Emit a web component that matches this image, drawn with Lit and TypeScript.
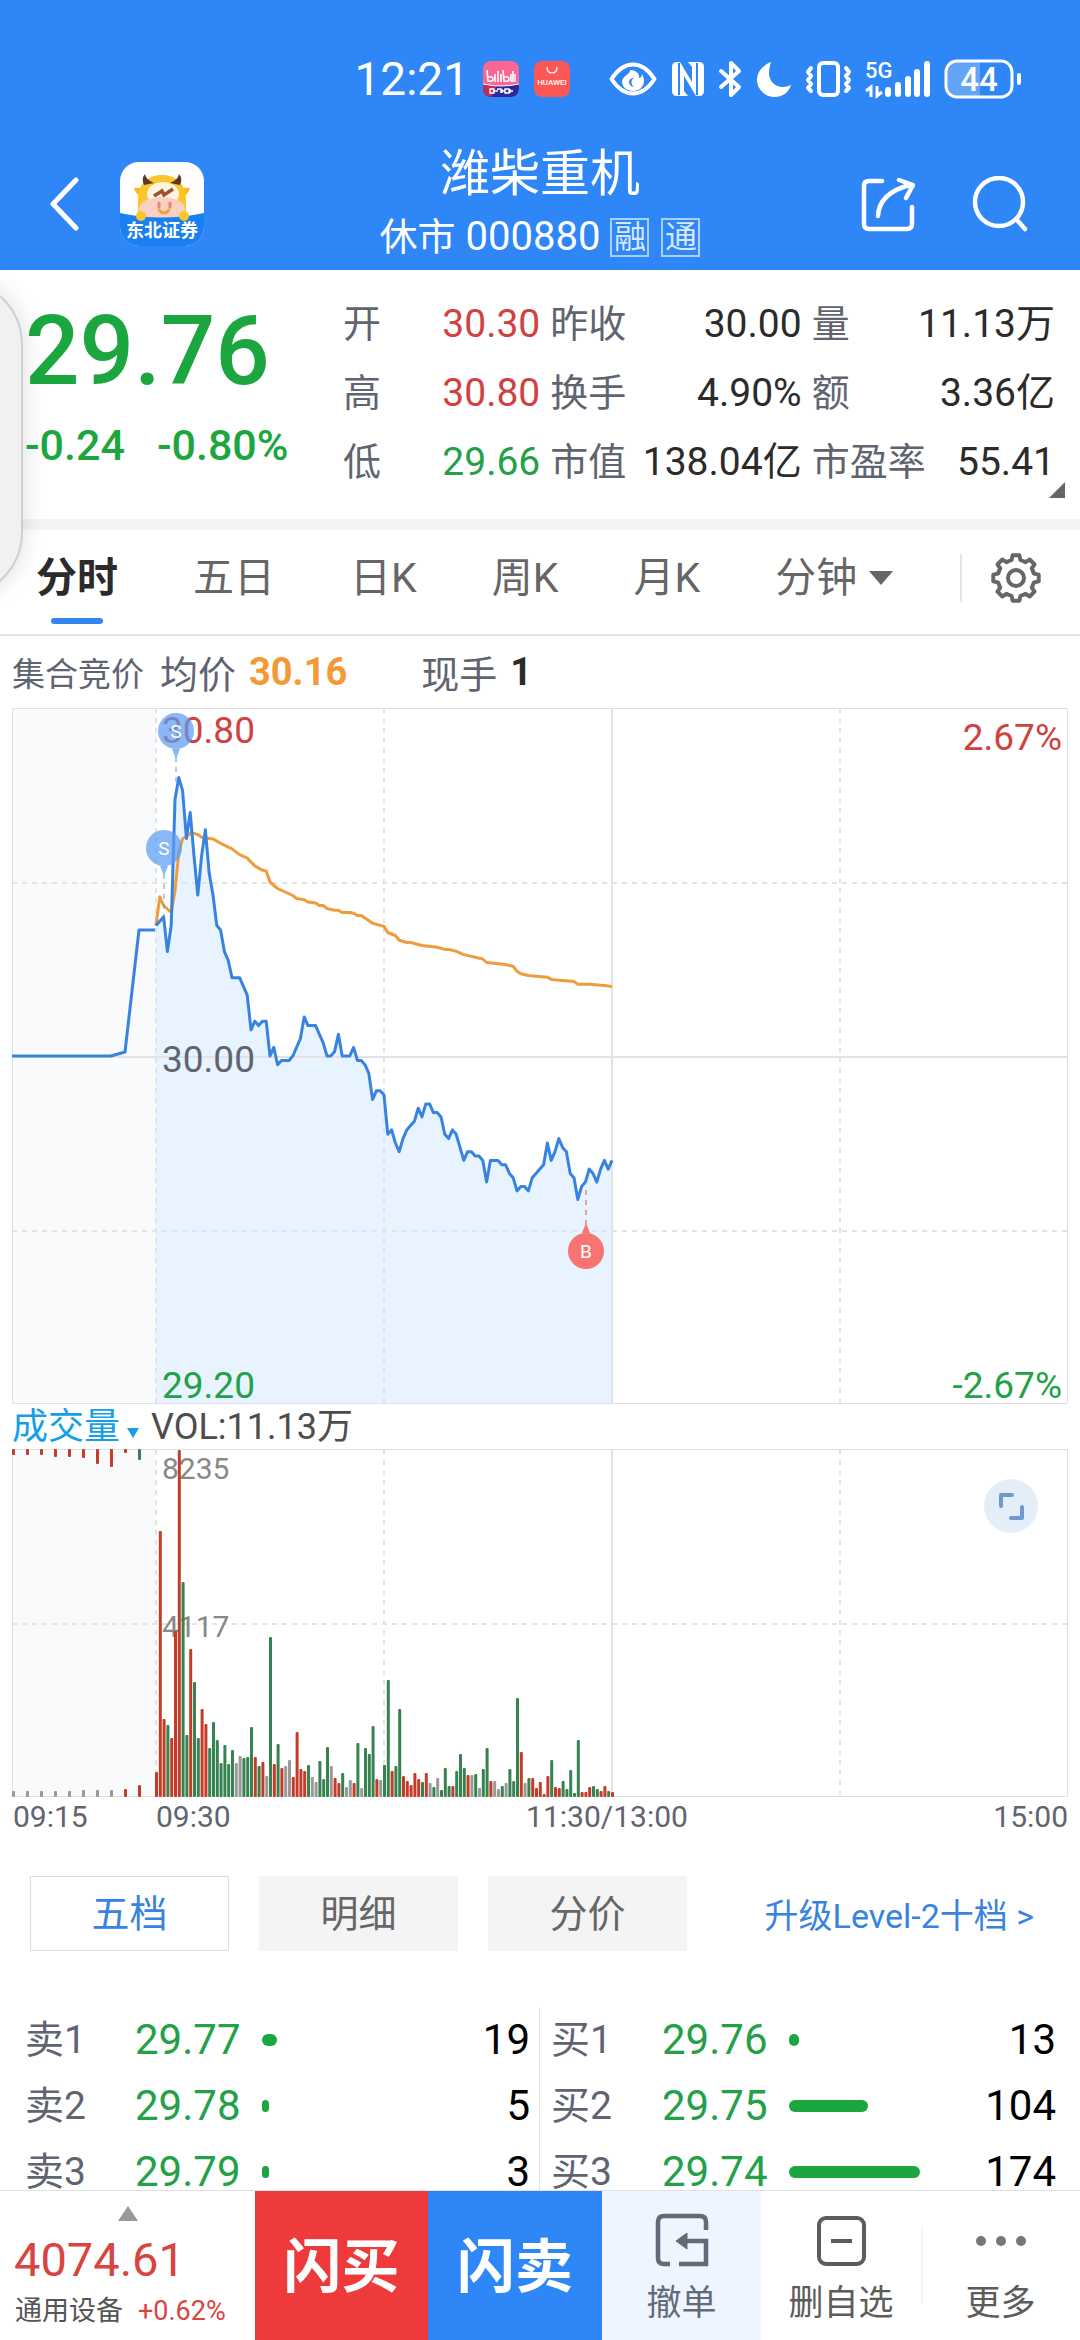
import { LitElement, html, svg, css } from "lit";
import { customElement } from "lit/decorators.js";

type Tone = "r" | "g" | "x";

/* Prices are stored per minute, in cents away from the previous close. */
const PRICE = [
  30, 31, 32, 24, 30, 59, 64, 61, 50, 56, 46, 37, 46, 52, 42, 37, 30, 29, 24, 22, 18, 18, 18, 16, 14, 6, 8, 7, 8, 8,
  0, 2, -2, -1, -1, -1, 0, 2, 4, 9, 7, 7, 7, 5, 3, 0, 0, 1, 5, 0, 0, 0, 2, -1, -1, -2, -4, -10, -8, -8,
  -9, -18, -17, -20, -22, -19, -17, -16, -15, -12, -14, -11, -11, -13, -13, -14, -18, -19, -17, -18, -21, -24, -22,
  -22, -23, -23, -24, -29, -24, -24, -24, -25, -25, -27, -28, -31, -30, -30, -31, -28, -27, -26, -25, -20, -24, -22,
  -19, -21, -22, -27, -28, -33, -30, -29, -26, -27, -29, -26, -24, -26, -24,
];

/* Average price: [minute, cents] */
const AVERAGE = [
  [0, 30], [1, 36.6], [2, 34.6], [4, 33], [5, 38], [6, 46.7], [7, 50], [8, 50.4], [9, 51.2], [10, 51.2], [11, 50.9],
  [12, 50.3], [13, 50.1], [15, 49.9], [17, 48.9], [20, 47.6], [22, 46.3], [24, 45.5], [26, 43.7], [28, 42.7],
  [29, 42.5], [30, 40], [32, 38.5], [36, 36.9], [37, 36.2], [39, 35.9], [40, 35.4], [42, 35.2], [43, 34.6],
  [44, 34.6], [45, 33.9], [47, 33.5], [48, 33.5], [49, 33], [51, 33], [52, 32.8], [53, 32.3], [54, 32.3], [57, 30.5],
  [60, 29.8], [61, 28.4], [63, 27.7], [64, 26.6], [66, 26.1], [67, 26.1], [70, 25.4], [74, 25], [76, 24.5],
  [77, 24.5], [79, 24.1], [81, 23.3], [86, 22.3], [87, 21.5], [92, 21], [94, 20.6], [95, 19.5], [96, 18.9],
  [98, 18.5], [103, 18.1], [104, 17.6], [110, 17.1], [111, 16.5], [114, 16.5], [118, 16.2], [120, 16],
];

const VOLUME =
  "25r 266r 78r 72g 59r 166r 347r 215g 62g 148r 115g 59g 88r 73r 49g 75g 57g 34g 52g 33g 47g 34x 41x 39g 40g 70g 40r " +
  "31g 35r 21x 160g 33r 53g 29r 31x 37x 20r 65r 28r 26r 32g 20x 15x 36g 18g 50g 31x 19r 14r 24g 10x 17x 14r 54g 9x " +
  "49g 43g 71g 18r 17x 32g 117g 26r 31g 88g 21r 16r 12r 24r 18r 15g 24r 14x 10g 19x 7g 29g 11g 11r 26g 43g 29g 22r " +
  "22x 23g 9x 28g 49g 16r 16x 8x 11g 14x 28g 16g 99g 45r 14x 19g 19r 9r 15r 3r 21r 37g 10r 9r 16g 8g 27g 4g 57g 5r " +
  "5r 10r 11g 8g 6r 11r 6g 5r";

const AUCTION_TOP = "6r 6r 6r 8r 8r 9r 15r 18r 4r 11g";
const AUCTION_BOTTOM = "6x 6x 6x 6x 6x 7x 7x 7x 8r 12r";

const TONES: Record<Tone, string> = { r: "#c63b28", g: "#368250", x: "#999" };
const OPEN_X = 156;
const MINUTE = 3.8;
const minuteX = (m: number) => OPEN_X + m * MINUTE;
const priceY = (c: number) => 349 - c * 4.35;
const parseBars = (s: string) => s.split(" ").map((b) => ({ h: parseInt(b, 10), tone: b.slice(-1) as Tone }));

@customElement("status-bar")
class StatusBar extends LitElement {
  static styles = css`
    :host { display: flex; align-items: center; justify-content: flex-end; gap: 14px; height: 134px; padding: 24px 58px 0 0; box-sizing: border-box; color: #fff; }
    .time { font-size: 46px; line-height: 48px; }
    .apps { display: flex; gap: 15px; margin-right: 25px; }
    svg { display: block; flex: none; overflow: visible; }
    .net { font: 500 22px/20px Roboto, sans-serif; }
    .batt { font: 500 33px/40px Roboto, sans-serif; }
    .brand { font: 500 8px/10px Roboto, sans-serif; }
  `;
  render() {
    return html`
      <span class="time">12:21</span>
      <span class="apps">
        <svg width="36" height="36" viewBox="0 0 36 36">
          <defs><clipPath id="r"><rect width="36" height="36" rx="8" /></clipPath></defs>
          <g clip-path="url(#r)">
            <rect width="36" height="36" fill="#fb6694" />
            <path d="M0 23q18 4 36 0v13H0z" fill="#2a2a9c" /><path d="M0 23q9 2 14 2l-6 11H0z" fill="#c22a5c" />
            <path d="M0 23q18 4 36 0" stroke="#fff" fill="none" />
            <path d="M4 9l1 11q5 1 5-2t-5-2M12 13v8M15 10v11M18 13v8M20 9l1 11q5 1 5-2t-5-2M28 13v8M30 10v11M32 13v8" stroke="#fff" stroke-width="1.6" fill="none" />
            <path d="M7 28h4v4H7zM10 30h5M14 28h4v4M19 28v4M18 30h4M22 28h4v4h-4zM27 28v4M26 30h4" fill="none" stroke="#fff" stroke-width="1.400" />
          </g>
        </svg>
        <svg width="36" height="36" viewBox="0 0 36 36">
          <rect width="36" height="36" rx="8" fill="#fb5754" />
          <path d="M13 6q0 6 5 6t5-6" stroke="#fff" stroke-width="1.2" fill="none" />
          <text class="brand" x="18" y="24" text-anchor="middle" fill="#fff">HUAWEI</text>
        </svg>
      </span>
      <svg width="48" height="34" viewBox="0 0 48 34">
        <path d="M2.5 17C9 7 16 2.500 24 2.500S39 7 45.500 17C39 27 32 31.500 24 31.500S9 27 2.500 17z" fill="none" stroke="#fff" stroke-width="4" stroke-linejoin="round" />
        <path d="M21 8c1 4-8 6-8 12 0 5 5 9 11 9 7 0 11-5 11-10 0-3-1-5-2-7 0 3-2 4-3 4 1-5-4-8-9-8z" fill="#fff" />
        <path d="M26 15c-5 3-4 8-1 10-3 0-5-3-5-5 0-3 4-4 6-5z" fill="#2f86f7" />
      </svg>
      <svg width="34" height="36" viewBox="0 0 34 36">
        <path d="M1 6q0-5 5-5h3l12 20V6l-4-5h11q5 0 5 5v24q0 5-5 5h-3L13 15v15l4 5H6q-5 0-5-5z" fill="#fff" />
        <path d="M8 2v32M26 2v32" stroke="#2f86f7" stroke-width="2" />
      </svg>
      <svg width="24" height="36" viewBox="0 0 24 36">
        <path d="M2 10l18 16-8 8V2l8 8L2 26" fill="none" stroke="#fff" stroke-width="4" stroke-linejoin="round" stroke-linecap="round" />
      </svg>
      <svg width="35" height="36" viewBox="0 0 35 36">
        <path d="M14 1C6 4 0 11 0 19c0 9 8 17 18 17 8 0 14-5 16-12-3 1-5 2-8 2-9 0-14-7-14-14 0-4 1-8 2-11z" fill="#fff" />
      </svg>
      <svg width="45" height="36" viewBox="0 0 45 36" fill="none" stroke="#fff">
        <rect x="13" y="2" width="19" height="32" rx="4" stroke-width="4" />
        <path d="M5 7l-3 4 3 4-3 4 3 4-3 4 3 3M40 7l3 4-3 4 3 4-3 4 3 4-3 3" stroke-width="4" stroke-linejoin="round" stroke-linecap="round" />
      </svg>
      <svg width="65" height="36" viewBox="0 0 65 36" fill="#fff">
        <text class="net" x="0" y="17">5G</text>
        <path d="M6 36V26L1 30M12 25v10l5-4" fill="none" stroke="#fff" stroke-width="3" />
        <rect x="20" y="26" width="6" height="10" rx="3" /><rect x="30" y="21" width="6" height="15" rx="3" />
        <rect x="40" y="15" width="6" height="21" rx="3" /><rect x="49" y="8" width="6" height="28" rx="3" />
        <rect x="59" y="0" width="6" height="36" rx="3" />
      </svg>
      <svg width="78" height="40" viewBox="0 0 78 40">
        <path d="M12 1h24v38H12Q2 39 2 28V12Q2 1 12 1z" fill="#fff" opacity=".25" />
        <rect x="2" y="2" width="66" height="36" rx="11" fill="none" stroke="#fff" stroke-width="3" />
        <rect x="73" y="14" width="4" height="12" rx="2" fill="#fff" />
        <text class="batt" x="35" y="32" text-anchor="middle" fill="#fff">44</text>
      </svg>
    `;
  }
}

@customElement("title-bar")
class TitleBar extends LitElement {
  static styles = css`
    :host { display: grid; grid-template-columns: 1fr auto 1fr; align-items: center; height: 136px; padding-top: 4px; box-sizing: border-box; color: #fff; }
    .side { display: flex; align-items: center; gap: 28px; padding-left: 36px; }
    .end { justify-content: flex-end; gap: 54px; padding: 0 52px 0 0; }
    button { all: unset; display: block; cursor: pointer; }
    svg { display: block; }
    .back { padding: 6px 6px; }
    .mid { display: flex; flex-direction: column; align-items: center; }
    h1 { margin: 0; font-weight: 400; font-size: 50px; line-height: 66px; }
    .sub { display: flex; align-items: center; font-size: 38px; line-height: 60px; }
    .code { margin: 0 10px; font-size: 40px; }
    .tag { box-sizing: border-box; width: 39px; height: 39px; border: 2px solid #a9cffb; font-size: 32px; line-height: 34px; text-align: center; color: #d5e8ff; margin-right: 12px; }
    .tag:last-child { margin-right: 0; }
    .logo { font: 700 18px/20px "Noto Sans CJK SC", sans-serif; }
  `;
  render() {
    return html`
      <div class="side">
        <button class="back" aria-label="返回">
          <svg width="44" height="54" viewBox="0 0 44 54"><path d="M34 3L11 27l23 24" fill="none" stroke="#fff" stroke-width="5" stroke-linejoin="round" stroke-linecap="round" /></svg>
        </button>
        <svg width="84" height="84" viewBox="0 0 84 84">
          <defs><clipPath id="l"><rect width="84" height="84" rx="19" /></clipPath></defs>
          <g clip-path="url(#l)">
            <rect width="84" height="84" fill="#fff" />
            <path d="M14 26q6-1 10 1l-2 8q-6-2-8-9zM70 26q-6-1-10 1l2 8q6-2 8-9z" fill="#f9b824" />
            <path d="M42 13c15 0 24 10 24 24v19H18V37c0-14 9-24 24-24z" fill="#fbc62c" />
            <path d="M24 23q-3-6 1-11 1 6 9 9zM60 23q3-6-1-11-1 6-9 9z" fill="#5c3527" />
            <ellipse cx="43" cy="32" rx="16" ry="12" fill="#fff4dd" />
            <path d="M34 34l8-5 2 4 9-6" fill="none" stroke="#9c5130" stroke-width="3.500" />
            <ellipse cx="42" cy="47" rx="23" ry="12" fill="#fbd0c2" />
            <path d="M39 41v4M50 41v4" stroke="#e28a70" stroke-width="3" stroke-linecap="round" />
            <path d="M39 48q5 6 10 0" fill="none" stroke="#eda23a" stroke-width="3" stroke-linecap="round" />
            <path d="M0 51q42 9 84 0v33H0z" fill="#1a7ff0" />
            <circle cx="21" cy="54" r="5" fill="#fbc62c" /><circle cx="64" cy="54" r="5" fill="#fbc62c" />
            <text class="logo" x="42" y="75" text-anchor="middle" fill="#fff">东北证券</text>
          </g>
        </svg>
      </div>
      <div class="mid">
        <h1>潍柴重机</h1>
        <div class="sub"><span>休市</span><span class="code">000880</span><span class="tag">融</span><span class="tag">通</span></div>
      </div>
      <div class="side end">
        <button aria-label="分享">
          <svg width="56" height="56" viewBox="0 0 56 56" fill="none" stroke="#fff" stroke-width="4.500" stroke-linecap="round" stroke-linejoin="round">
            <path d="M22 5H9Q4 5 4 10v38q0 5 5 5h38q5 0 5-5V31" /><path d="M18 40Q19 17 50 9M39 4l14 5-7 13" />
          </svg>
        </button>
        <button aria-label="搜索">
          <svg width="58" height="56" viewBox="0 0 58 56" fill="none" stroke="#fff" stroke-width="4.500" stroke-linecap="round">
            <circle cx="29" cy="26" r="24" /><path d="M47 44l8 9" />
          </svg>
        </button>
      </div>
    `;
  }
}

@customElement("quote-panel")
class QuotePanel extends LitElement {
  static styles = css`
    :host { display: grid; grid-template-columns: 318px 1fr; position: relative; padding: 20px 25px 22px; background: #fff; border-bottom: 11px solid #f4f4f4; }
    .last { color: #1ba640; font-weight: 500; }
    .price { font-size: 96px; line-height: 122px; }
    .chg { display: flex; gap: 32px; font-size: 43px; line-height: 66px; }
    dl { display: grid; grid-template-columns: 197fr 251fr 243fr; column-gap: 10px; margin: 0; }
    .cell { display: flex; justify-content: space-between; line-height: 69px; }
    dt { font-size: 38px; color: #5f6470; }
    dd { margin: 0; font-size: 39px; color: #2b2b2b; }
    .r { color: #cf423f; } .g { color: #24a148; }
    .more { position: absolute; right: 15px; bottom: 21px; }
  `;
  private cells = [
    ["开", "30.30", "r"], ["昨收", "30.00", ""], ["量", "11.13万", ""],
    ["高", "30.80", "r"], ["换手", "4.90%", ""], ["额", "3.36亿", ""],
    ["低", "29.66", "g"], ["市值", "138.04亿", ""], ["市盈率", "55.41", ""],
  ];
  render() {
    return html`
      <div class="last"><div class="price">29.76</div><div class="chg"><span>-0.24</span><span>-0.80%</span></div></div>
      <dl>${this.cells.map(([k, v, c]) => html`<div class="cell"><dt>${k}</dt><dd class=${c}>${v}</dd></div>`)}</dl>
      <svg class="more" width="16" height="16" viewBox="0 0 16 16"><path d="M16 0v16H0z" fill="#666" /></svg>
    `;
  }
}

@customElement("period-tabs")
class PeriodTabs extends LitElement {
  static styles = css`
    :host { display: flex; align-items: stretch; height: 106px; padding: 0 38px 0 36px; box-sizing: border-box; border-bottom: 2px solid #e4e4e4; background: #fff; }
    nav { display: flex; gap: 75px; flex: 1; }
    button { all: unset; position: relative; display: flex; align-items: center; gap: 12px; font-size: 41px; line-height: 48px; color: #666; padding-bottom: 8px; cursor: pointer; }
    .on { color: #2b2b2b; font-weight: 700; }
    .on::after { content: ""; position: absolute; left: 15px; right: 15px; bottom: 10px; height: 6px; border-radius: 3px; background: #3485f0; }
    .gear { padding: 0 0 8px 28px; }
    .rule { width: 2px; height: 48px; margin-top: 24px; background: #e4e4e4; }
  `;
  private gearPath() {
    const pts: string[] = [];
    for (let k = 0; k < 8; k++) {
      const a = (k * Math.PI) / 4 - Math.PI / 2;
      for (const [d, r] of [[-0.24, 18.5], [-0.15, 23], [0.15, 23], [0.24, 18.5]]) {
        pts.push(`${(26 + r * Math.cos(a + d)).toFixed(1)} ${(26 + r * Math.sin(a + d)).toFixed(1)}`);
      }
    }
    return `M${pts.join("L")}z`;
  }
  render() {
    return html`
      <nav>
        <button class="on">分时</button><button>五日</button><button>日K</button><button>周K</button><button>月K</button>
        <button>分钟<svg width="24" height="14" viewBox="0 0 24 14"><path d="M0 0h24L12 14z" fill="#666" /></svg></button>
      </nav>
      <div class="rule"></div>
      <button class="gear" aria-label="设置">
        <svg width="52" height="52" viewBox="0 0 52 52" fill="none" stroke="#666" stroke-width="4" stroke-linejoin="round"><path d=${this.gearPath()} /><circle cx="26" cy="26" r="8" /></svg>
      </button>
    `;
  }
}

@customElement("time-chart")
class TimeChart extends LitElement {
  static styles = css`
    :host { display: block; background: #fff; }
    svg { display: block; width: 100%; height: auto; overflow: visible; }
    .info { display: flex; align-items: center; height: 71px; padding: 0 12px; font-size: 38px; color: #5f6470; }
    .small { font-size: 33px; margin-right: 16px; }
    .avg { color: #f39a36; font-weight: 700; font-size: 38px; margin: 0 74px 0 13px; }
    .hand { color: #2b2b2b; font-weight: 700; margin-left: 13px; }
    .vol { display: flex; align-items: center; height: 43px; padding: 0 12px; font-size: 36px; line-height: 42px; color: #4d4d4d; }
    .pick { all: unset; display: flex; align-items: center; gap: 7px; color: #169fe6; margin-right: 12px; cursor: pointer; }
    .pick svg { width: 12px; height: 10px; margin-top: 12px; }
    .pane { position: relative; }
    .expand { all: unset; position: absolute; right: 42px; top: 31px; cursor: pointer; }
    .expand svg { width: 54px; height: 54px; }
    .p { font-size: 37px; } .v { font-size: 30px; }
    .mark { font-size: 19px; }
    .grid { fill: none; stroke: #e3e3e5; stroke-width: 2; }
    .frame { fill: none; stroke: #e0e0e2; stroke-width: 1; }
    .dash { stroke-dasharray: 5 5; }
  `;

  private pin(x: number, y: number, letter: string, color: string, end: number) {
    const dir = end > y ? 1 : -1;
    return svg`
      <path d="M${x} ${y + dir * 26}V${end}" stroke=${color} stroke-width="2" stroke-dasharray="5 5" opacity=".7" />
      <g fill=${color}>
        <path d="M${x} ${y + dir * 28}l-4 ${-dir * 10}h8z" /><circle cx=${x} cy=${y} r="18" />
      </g>
      <text class="mark" x=${x} y=${y + 7} text-anchor="middle" fill="#fff">${letter}</text>`;
  }

  private priceChart() {
    const line = PRICE.map((c, i) => `${minuteX(i).toFixed(1)} ${priceY(c).toFixed(1)}`).join("L");
    const avg = AVERAGE.map(([m, c]) => `${minuteX(m).toFixed(1)} ${priceY(c).toFixed(1)}`).join("L");
    return html`
      <svg viewBox="0 0 1080 698">
        <rect x="12" y="1" width="144" height="696" fill="#f8fafc" />
        <path d="M${OPEN_X} 697L${line}V697z" fill="#e7f3fe" />
        <path class="frame" d="M12.500 1.500H1067.500V696.500H12.500z" />
        <path class="grid" d="M12 350H1067M612 1V697" />
        <path class="grid dash" d="M12 176H1067M12 524H1067M156 1V697M384 1V697M840 1V697" />
        <g class="p">
          <text x="162" y="36" fill="#cf423f">30.80</text><text x="162" y="365" fill="#5f6470">30.00</text>
          <text x="162" y="691" fill="#24a148">29.20</text>
          <text x="1062" y="43" fill="#cf423f" text-anchor="end">2.67%</text>
          <text x="1062" y="691" fill="#24a148" text-anchor="end">-2.67%</text>
        </g>
        <g fill="none" stroke-width="3" stroke-linejoin="round">
          <path d="M${avg}" stroke="#ee9c3c" />
          <path d="M12 349H111L125 345L139 223H155" stroke="#3983e0" />
          <path d="M${line}" stroke="#3983e0" />
        </g>
        ${this.pin(176, 24, "S", "rgba(93,156,242,.72)", 78)} ${this.pin(164, 141, "S", "rgba(93,156,242,.72)", 209)}
        ${this.pin(586, 544, "B", "#f77472", 480)}
      </svg>`;
  }

  private volumeChart() {
    const bar = (x: number, y: number, h: number, tone: Tone) =>
      svg`<rect x=${x.toFixed(1)} y=${y} width="3" height=${h} rx="1" fill=${TONES[tone]} />`;
    const auctionX = (i: number) => 12 + i * 14;
    return html`
      <svg viewBox="0 0 1080 392">
        <rect x="12" y="2" width="144" height="347" fill="#f8fafc" />
        <path class="frame" d="M12.500 1.500H1067.500V348.500H12.500z" />
        <path class="grid" d="M612 2V349" />
        <path class="grid dash" d="M12 176H1067M156 2V349M384 2V349M840 2V349" />
        <g class="v" fill="#888"><text x="162" y="31">8235</text><text x="162" y="189">4117</text></g>
        ${parseBars(AUCTION_TOP).map((b, i) => bar(auctionX(i), 1, b.h, b.tone))}
        ${parseBars(AUCTION_BOTTOM).map((b, i) => bar(auctionX(i), 349 - b.h, b.h, b.tone))}
        ${parseBars(VOLUME).map((b, i) => bar(minuteX(i) - 1, 349 - b.h, b.h, b.tone))}
        <g class="v" fill="#5f6470">
          <text x="13" y="379">09:15</text><text x="156" y="379">09:30</text>
          <text x="607" y="379" text-anchor="middle">11:30/13:00</text><text x="1068" y="379" text-anchor="end">15:00</text>
        </g>
      </svg>`;
  }

  render() {
    return html`
      <div class="info"><span class="small">集合竞价</span><span>均价</span><span class="avg">30.16</span><span>现手</span><span class="hand">1</span></div>
      ${this.priceChart()}
      <div class="vol">
        <button class="pick">成交量<svg viewBox="0 0 12 10"><path d="M0 0h12L6 10z" fill="#169fe6" /></svg></button>
        <span>VOL:11.13万</span>
      </div>
      <div class="pane">
        ${this.volumeChart()}
        <button class="expand" aria-label="全屏">
          <svg viewBox="0 0 54 54"><circle cx="27" cy="27" r="27" fill="#e4eef9" /><path d="M17 27V16h11M27 39h11V28" fill="none" stroke="#7198c8" stroke-width="4" stroke-linecap="round" stroke-linejoin="round" /></svg>
        </button>
      </div>
    `;
  }
}

@customElement("order-book")
class OrderBook extends LitElement {
  static styles = css`
    :host { display: flex; flex-direction: column; flex: 1; min-height: 0; overflow: hidden; background: #fff; }
    .tabs { display: grid; grid-template-columns: 199fr 199fr 199fr 333fr; column-gap: 30px; padding: 36px 30px 56px; align-items: center; }
    .tabs button { all: unset; box-sizing: border-box; height: 75px; text-align: center; font-size: 38px; line-height: 74px; color: #666; background: #f4f4f4; border: 1px solid #f4f4f4; cursor: pointer; }
    .tabs .on { background: #fff; border-color: #dedede; color: #3983e0; }
    .tabs a { text-align: right; padding-right: 16px; font-size: 34px; color: #3983e0; text-decoration: none; white-space: nowrap; }
    .book { display: grid; grid-template-columns: 1fr 1fr; }
    table { width: 100%; border-collapse: collapse; table-layout: fixed; font-size: 42px; line-height: 66px; }
    .asks { border-right: 1px solid #e4e4e4; }
    td, th { padding: 0; height: 66px; font-weight: 400; text-align: left; }
    th { width: 110px; color: #5f6470; font-size: 39px; }
    .asks th { padding-left: 25px; } .bids th { padding-left: 11px; }
    .bids th { width: 111px; }
    .px { width: 127px; color: #24a148; }
    .qty { text-align: right; color: #000; width: 110px; }
    .asks .qty { padding-right: 9px; } .bids .qty { padding-right: 24px; }
    .bar { height: 12px; border-radius: 6px; background: #1ba640; }
  `;
  private asks = [["卖1", "29.77", 15, "19"], ["卖2", "29.78", 7, "5"], ["卖3", "29.79", 7, "3"]] as const;
  private bids = [["买1", "29.76", 10, "13"], ["买2", "29.75", 79, "104"], ["买3", "29.74", 131, "174"]] as const;
  private table(cls: string, rows: readonly (readonly [string, string, number, string])[]) {
    return html`<div class=${cls}><table><tbody>
      ${rows.map(([n, p, w, q]) => html`<tr><th scope="row">${n}</th><td class="px">${p}</td><td><div class="bar" style="width:${w}px"></div></td><td class="qty">${q}</td></tr>`)}
    </tbody></table></div>`;
  }
  render() {
    return html`
      <div class="tabs"><button class="on">五档</button><button>明细</button><button>分价</button><a href="#level2">升级Level-2十档 &gt;</a></div>
      <div class="book">${this.table("asks", this.asks)}${this.table("bids", this.bids)}</div>
    `;
  }
}

@customElement("action-bar")
class ActionBar extends LitElement {
  static styles = css`
    :host { display: grid; grid-template-columns: 255fr 173fr 174fr 159fr 160fr 159fr; height: 150px; flex: none; background: #fff; border-top: 1px solid #e0e0e0; box-sizing: border-box; }
    button { all: unset; box-sizing: border-box; display: flex; flex-direction: column; align-items: center; cursor: pointer; }
    svg { display: block; flex: none; }
    .index { padding-top: 15px; }
    .val { align-self: flex-start; padding-left: 14px; margin-top: 16px; font-size: 47px; line-height: 46px; color: #d8443f; }
    .row { align-self: flex-start; display: flex; gap: 15px; padding-left: 15px; margin-top: 10px; font-size: 27px; line-height: 36px; color: #555; }
    .up { color: #d8443f; }
    .deal { justify-content: center; padding-bottom: 8px; color: #fff; font-size: 58px; font-weight: 700; }
    .buy { background: #ee3a3a; } .sell { background: #2f86f7; }
    .act { padding-top: 22px; gap: 13px; font-size: 35px; line-height: 48px; color: #5c5c5c; }
    .cancel { background: #eef5fe; color: #626a7c; }
    .last { position: relative; }
    .last::before { content: ""; position: absolute; left: 0; top: 37px; width: 2px; height: 76px; background: #eef4fb; }
  `;
  render() {
    return html`
      <button class="index">
        <svg width="20" height="15" viewBox="0 0 20 15"><path d="M10 0l10 15H0z" fill="#999" /></svg>
        <span class="val">4074.61</span>
        <span class="row"><span>通用设备</span><span class="up">+0.62%</span></span>
      </button>
      <button class="deal buy">闪买</button>
      <button class="deal sell">闪卖</button>
      <button class="act cancel">
        <svg width="54" height="54" viewBox="0 0 54 54" fill="none" stroke="#626a7c" stroke-width="4.500">
          <path d="M51 17V9q0-6-6-6H9Q3 3 3 9v36q0 6 6 6h6M24 51h27V28H28" /><path d="M32 20v16l-11-8z" fill="#626a7c" stroke-width="1" />
        </svg>撤单
      </button>
      <button class="act">
        <svg width="54" height="54" viewBox="0 0 54 54" fill="none" stroke="#5c5c5c" stroke-width="4"><rect x="5" y="5" width="45" height="46" rx="7" /><path d="M17 28h21" /></svg>删自选
      </button>
      <button class="act last">
        <svg width="54" height="54" viewBox="0 0 54 54" fill="#777"><circle cx="7" cy="28" r="5" /><circle cx="27" cy="28" r="5" /><circle cx="47" cy="28" r="5" /></svg>更多
      </button>
    `;
  }
}

@customElement("app-root")
class AppRoot extends LitElement {
  static styles = css`
    :host { display: flex; flex-direction: column; position: relative; height: 100vh; overflow: hidden; background: #fff; font-family: Roboto, "Noto Sans CJK SC", sans-serif; }
    header { background: #2f86f7; flex: none; }
    .handle { position: absolute; left: -117px; top: 279px; width: 140px; height: 319px; box-sizing: border-box; border: 2px solid #cfcfcf; border-radius: 66px; background: #f1f1f1; box-shadow: 0 0 24px #0002; }
  `;
  render() {
    return html`
      <header><status-bar></status-bar><title-bar></title-bar></header>
      <quote-panel></quote-panel>
      <period-tabs></period-tabs>
      <time-chart></time-chart>
      <order-book></order-book>
      <action-bar></action-bar>
      <div class="handle"></div>
    `;
  }
}
